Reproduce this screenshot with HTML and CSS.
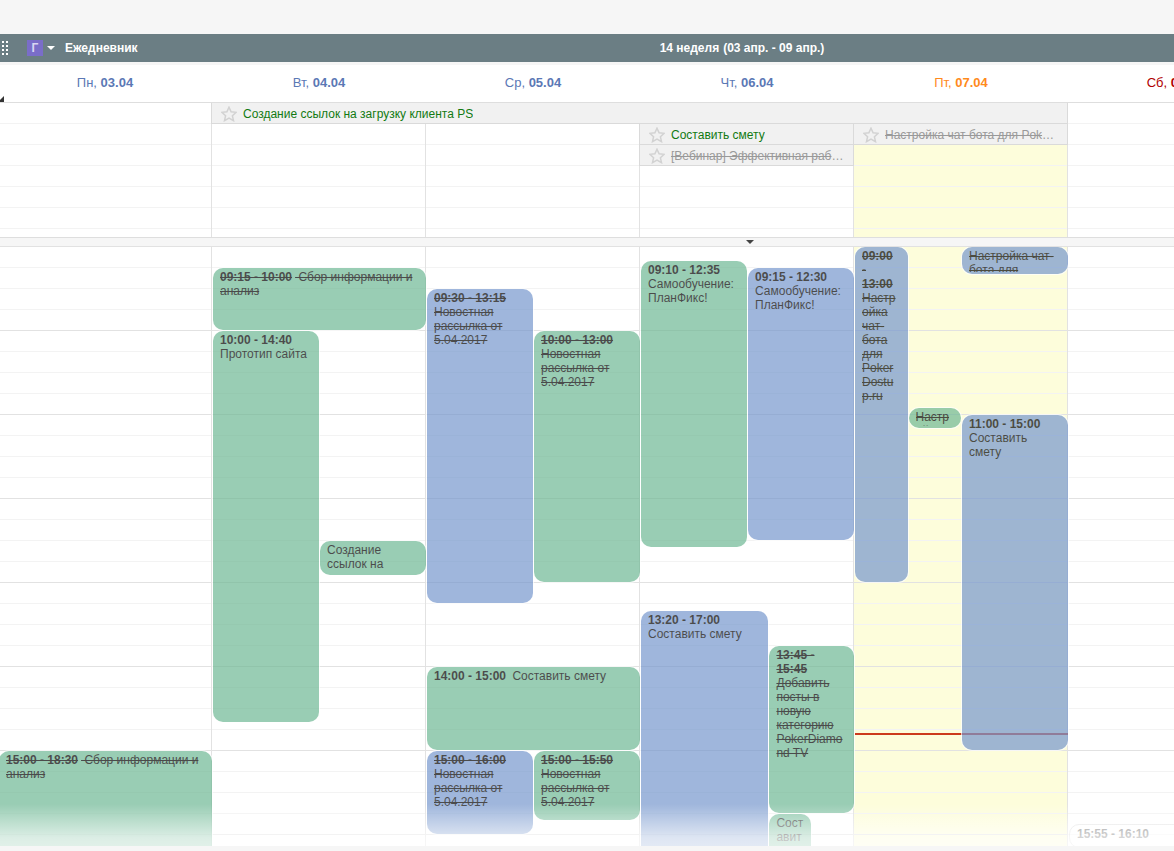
FILE: index.html
```html
<!DOCTYPE html>
<html lang="ru">

<head>
    <meta charset="UTF-8">
    <meta name="viewport" content="width=device-width, initial-scale=1.0">
    <title>Ежедневник</title>
    <link rel="stylesheet" href="styles.css">
</head>

<body>
    <svg class="sprite" aria-hidden="true">
        <symbol id="star" viewBox="0 0 16 16">
            <path d="M8 1.2 L10.1 5.8 L15.1 6.3 L11.4 9.7 L12.5 14.7 L8 12.2 L3.5 14.7 L4.6 9.7 L0.9 6.3 L5.9 5.8 Z" />
        </symbol>
    </svg>

    <div class="planner">
        <!-- Title bar -->
        <header class="toolbar">
            <div class="toolbar-left">
                <svg class="grip" width="6" height="14" viewBox="0 0 6 14" aria-hidden="true">
                    <path d="M1 0v14M5 0v14" />
                </svg>
                <button class="menu-button" type="button">
                    <span class="badge">Г</span>
                    <svg width="8" height="4" viewBox="0 0 8 4" aria-hidden="true">
                        <path d="M0 0h8L4 4z" />
                    </svg>
                </button>
                <h1>Ежедневник</h1>
            </div>
            <div class="week">
                <span>14 неделя</span>
                <span>(03 апр. - 09 апр.)</span>
            </div>
        </header>

        <!-- Day names -->
        <div class="days board">
            <div class="day">Пн, <b>03.04</b></div>
            <div class="day">Вт, <b>04.04</b></div>
            <div class="day">Ср, <b>05.04</b></div>
            <div class="day">Чт, <b>06.04</b></div>
            <div class="day today">Пт, <b>07.04</b></div>
            <div class="day weekend">Сб, <b>08.04</b></div>
            <div class="day weekend">Вс, <b>09.04</b></div>
            <svg class="corner" width="4" height="6" viewBox="0 0 4 6" aria-hidden="true">
                <path d="M4 0v6H0V4z" />
            </svg>
        </div>

        <!-- Tasks for the whole day -->
        <div class="all-day">
            <div class="board columns">
                <div class="column"></div>
                <div class="column"></div>
                <div class="column"></div>
                <div class="column"></div>
                <div class="column today"></div>
                <div class="column"></div>
                <div class="column"></div>
            </div>
            <div class="board tasks">
                <div class="task" style="grid-area: 1 / 2 / 2 / 6">
                    <button class="star" type="button" aria-label="В избранное"><svg><use href="#star" /></svg></button>
                    <a href="#">Создание ссылок на загрузку клиента PS</a>
                </div>
                <div class="task" style="grid-area: 2 / 4">
                    <button class="star" type="button" aria-label="В избранное"><svg><use href="#star" /></svg></button>
                    <a href="#">Составить смету</a>
                </div>
                <div class="task done" style="grid-area: 2 / 5">
                    <button class="star" type="button" aria-label="В избранное"><svg><use href="#star" /></svg></button>
                    <a href="#"><s>Настройка чат бота для PokerDostup.ru</s></a>
                </div>
                <div class="task done" style="grid-area: 3 / 4">
                    <button class="star" type="button" aria-label="В избранное"><svg><use href="#star" /></svg></button>
                    <a href="#"><s>[Вебинар] Эффективная работа</s></a>
                </div>
            </div>
        </div>

        <div class="splitter">
            <svg width="8" height="4" viewBox="0 0 8 4" aria-hidden="true">
                <path d="M0 0h8L4 4z" />
            </svg>
        </div>

        <!-- Timed events, one grid row is five minutes from 09:00 -->
        <main class="timeline">
            <div class="board">
                <div class="column">
                    <div class="event green done" style="grid-area: 73 / 1 / 115 / 21">
                        <div class="text"><b>15:00 - 18:30</b> Сбор информации и анализ</div>
                    </div>
                </div>

                <div class="column">
                    <div class="event green done" style="grid-area: 4 / 1 / 13 / 21">
                        <div class="text"><b>09:15 - 10:00</b> Сбор информации и анализ</div>
                    </div>
                    <div class="event green" style="grid-area: 13 / 1 / 69 / 11">
                        <div class="text"><b>10:00 - 14:40</b> Прототип сайта</div>
                    </div>
                    <div class="event green" style="grid-area: 43 / 11 / 48 / 21">
                        <div class="text">Создание ссылок на загрузку</div>
                    </div>
                </div>

                <div class="column">
                    <div class="event blue done" style="grid-area: 7 / 1 / 52 / 11">
                        <div class="text"><b>09:30 - 13:15</b> Новостная рассылка от 5.04.2017</div>
                    </div>
                    <div class="event green done" style="grid-area: 13 / 11 / 49 / 21">
                        <div class="text"><b>10:00 - 13:00</b> Новостная рассылка от 5.04.2017</div>
                    </div>
                    <div class="event green" style="grid-area: 61 / 1 / 73 / 21">
                        <div class="text"><b>14:00 - 15:00</b> Составить смету</div>
                    </div>
                    <div class="event blue done" style="grid-area: 73 / 1 / 85 / 11">
                        <div class="text"><b>15:00 - 16:00</b> Новостная рассылка от 5.04.2017</div>
                    </div>
                    <div class="event green done" style="grid-area: 73 / 11 / 83 / 21">
                        <div class="text"><b>15:00 - 15:50</b> Новостная рассылка от 5.04.2017</div>
                    </div>
                </div>

                <div class="column">
                    <div class="event green" style="grid-area: 3 / 1 / 44 / 11">
                        <div class="text"><b>09:10 - 12:35</b> Самообучение: ПланФикс!</div>
                    </div>
                    <div class="event blue" style="grid-area: 4 / 11 / 43 / 21">
                        <div class="text"><b>09:15 - 12:30</b> Самообучение: ПланФикс!</div>
                    </div>
                    <div class="event blue" style="grid-area: 53 / 1 / 97 / 13">
                        <div class="text"><b>13:20 - 17:00</b> Составить смету</div>
                    </div>
                    <div class="event green done" style="grid-area: 58 / 13 / 82 / 21">
                        <div class="text"><b>13:45 - 15:45</b> Добавить посты в новую категорию PokerDiamond TV</div>
                    </div>
                    <div class="event green narrow" style="grid-area: 82 / 13 / 94 / 17">
                        <div class="text">Составить смету</div>
                    </div>
                </div>

                <div class="column today">
                    <div class="now"></div>
                    <div class="event blue done" style="grid-area: 1 / 1 / 49 / 6">
                        <div class="text"><b>09:00 - 13:00</b> Настройка чат-бота для PokerDostup.ru</div>
                    </div>
                    <div class="event green done" style="grid-area: 24 / 6 / 27 / 11">
                        <div class="text">Настройка</div>
                    </div>
                    <div class="event blue done" style="grid-area: 1 / 11 / 5 / 21">
                        <div class="text">Настройка чат-бота для</div>
                    </div>
                    <div class="event blue" style="grid-area: 25 / 11 / 73 / 21">
                        <div class="text"><b>11:00 - 15:00</b> Составить смету</div>
                    </div>
                </div>

                <div class="column">
                    <div class="event plain" style="grid-area: 84 / 1 / 87 / 21">
                        <div class="text"><b>15:55 - 16:10</b></div>
                    </div>
                </div>

                <div class="column"></div>
            </div>
            <div class="fade"></div>
        </main>

        <footer class="bottom-bar"></footer>
    </div>
</body>

</html>
```

FILE: styles.css
```css
* {
    margin: 0;
    padding: 0;
    box-sizing: border-box;
}

body {
    font-family: "Liberation Sans", Arial, sans-serif;
    font-size: 12px;
    line-height: 14px;
    background-color: #fff;
}

button {
    border: none;
    background: none;
    font: inherit;
    cursor: pointer;
}

.sprite {
    position: absolute;
    width: 0;
    height: 0;
}

.planner {
    display: flex;
    flex-direction: column;
    height: 100vh;
    overflow: hidden;
    border-top: 34px solid #f6f6f6;
}

/* Seven day columns, the week is cut off when the window is narrow */
.board {
    display: grid;
    grid-template-columns: repeat(7, minmax(214px, 1fr));
    margin-left: -2px;
}

/* Title bar */
.toolbar {
    display: grid;
    grid-template-columns: 1fr auto 1fr;
    align-items: center;
    min-width: 1484px;
    height: 28px;
    background-color: #6b7e84;
    color: #fff;
    font-weight: bold;
}

.toolbar-left {
    display: flex;
    align-items: center;
}

.toolbar h1 {
    font-size: 12px;
    margin-left: 10px;
}

.grip {
    margin-left: 2px;
    stroke: #fff;
    stroke-width: 2;
    stroke-dasharray: 2 2;
}

.menu-button {
    display: flex;
    align-items: center;
    gap: 4px;
    margin-left: 19px;
}

.menu-button svg {
    fill: #fff;
}

.badge {
    width: 16px;
    height: 16px;
    line-height: 16px;
    background-color: #7a6dc9;
    color: #d9d5f2;
    text-align: center;
}

.week {
    display: flex;
    gap: 4px;
}

/* Day names */
.days {
    position: relative;
    height: 40px;
    border-top: 3px solid #f6f6f6;
    line-height: 36px;
    font-size: 13px;
    text-align: center;
    color: #5b78b5;
}

.days .today {
    color: #ff8a1c;
}

.days .weekend {
    color: #b00000;
}

.corner {
    position: absolute;
    left: 2px;
    bottom: 0;
    fill: #333;
}

/* Whole day tasks */
.all-day {
    display: grid;
    height: 136px;
    border-top: 1px solid #dedede;
    border-bottom: 1px solid #dedede;
}

.all-day > .board {
    grid-area: 1 / 1;
}

.column {
    border-right: 1px solid #e2e2e2;
}

.column.today {
    background-color: #fdfddb;
}

.columns .column {
    background-image: repeating-linear-gradient(transparent 0 20px, #f3f3f3 20px 21px);
}

.tasks {
    grid-auto-rows: 21px;
}

.task {
    display: flex;
    align-items: center;
    gap: 6px;
    min-width: 0;
    margin-left: -1px;
    padding: 2px 9px 0;
    border: 1px solid #dadada;
    border-top: none;
    background-color: #f1f1f1;
}

.task a {
    overflow: hidden;
    text-overflow: ellipsis;
    white-space: nowrap;
    text-decoration: none;
    color: #127a12;
}

.task.done a {
    color: #999;
}

.star {
    flex: none;
    width: 16px;
    height: 16px;
}

.star svg {
    display: block;
    width: 16px;
    height: 16px;
    fill: none;
    stroke: #d2d2d2;
    stroke-width: 1.5;
}

/* Splitter between the two panes */
.splitter {
    display: flex;
    flex: none;
    justify-content: center;
    align-items: center;
    min-width: 1500px;
    height: 9px;
    border-bottom: 1px solid #e2e2e2;
    background-color: #f6f6f6;
}

.splitter svg {
    fill: #444;
}

/* Timeline */
.timeline {
    position: relative;
    flex: 1;
    min-height: 0;
    overflow: hidden;
}

.timeline .column {
    position: relative;
    display: grid;
    grid-template-columns: repeat(20, minmax(0, 1fr));
    grid-template-rows: repeat(120, 7px);
    border-right: none;
    background-image:
        linear-gradient(to left, #e2e2e2 1px, transparent 1px),
        repeating-linear-gradient(transparent 0 83px, #e2e2e2 83px 84px),
        repeating-linear-gradient(transparent 0 20px, #f3f3f3 20px 21px);
}

.event {
    margin: 0 0 1px 1px;
    padding: 2px 8px 2px 7px;
    border-radius: 10px;
    box-shadow: 0 0 0 1px #fff;
    opacity: 0.7;
    overflow-wrap: anywhere;
    z-index: 1;
}

.event .text {
    height: 100%;
    overflow: hidden;
}

.event b {
    margin-right: 3px;
}

.event.green {
    background-color: #6fb895;
}

.event.blue {
    background-color: #7798ce;
}

/* Short event without a category, kept tall enough for one line */
.event.plain {
    align-self: end;
    height: 24px;
    border: 1px solid #ddd;
    background-color: #fff;
    color: #555;
}

.event.narrow {
    padding-right: 6px;
}

.event.done {
    text-decoration: line-through;
}

/* Current time, 14:47 */
.now {
    position: absolute;
    top: 486px;
    left: 1px;
    right: 0;
    height: 2px;
    background-color: #cc3a1c;
}

.fade {
    position: absolute;
    left: 0;
    right: 0;
    bottom: 0;
    z-index: 2;
    height: 42px;
    background-image: linear-gradient(rgba(255, 255, 255, 0), rgba(255, 255, 255, 0.65) 80%, rgba(255, 255, 255, 0.7));
}

.bottom-bar {
    flex: none;
    height: 5px;
    background-color: #f6f6f6;
}
```
